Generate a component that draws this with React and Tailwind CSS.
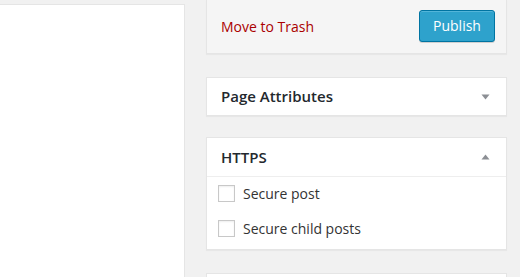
import React from "react";

function Down() {
  return (
    <svg width="9" height="6" viewBox="0 0 9 6">
      <polygon points="0.5,0.5 8.5,0.5 4.5,5.5" fill="#8c8f94" />
    </svg>
  );
}
function Up() {
  return (
    <svg width="9" height="6" viewBox="0 0 9 6">
      <polygon points="0.5,5.5 8.5,5.5 4.5,0.5" fill="#8c8f94" />
    </svg>
  );
}

function Check({ label }) {
  return (
    <label className="flex items-center h-[35px]">
      <span className="w-[17px] h-[17px] border border-[#c8c8c8] bg-white shadow-[inset_0_1px_2px_rgba(0,0,0,0.07)] ml-[11px] mr-[8px]" />
      <span className="text-[14px] text-[#333]">{label}</span>
    </label>
  );
}

export default function App() {
  return (
    <div
      className="w-[520px] h-[277px] bg-[#f1f1f1] overflow-hidden flex"
      style={{ fontFamily: '"Open Sans", "Noto Sans", sans-serif' }}
    >
      <div className="w-[185px] shrink-0 mt-[4px] h-[300px] bg-white border-t border-r border-[#e5e5e5]" />
      <div className="ml-[21px] w-[301px] shrink-0 flex flex-col">
        <div className="shrink-0 h-[54px] bg-[#f5f5f5] border border-t-0 border-[#e5e5e5] shadow-[0_1px_1px_rgba(0,0,0,0.04)] flex items-center justify-between pl-[14px] pr-[11px]">
          <span className="text-[14px] text-[#a00] -mt-[1px]">Move to Trash</span>
          <button className="w-[76px] h-[32px] rounded-[3px] bg-[#2ea2cc] border border-[#0074a2] text-white text-[14px] shadow-[inset_0_1px_0_rgba(120,200,230,0.5),0_1px_0_rgba(0,0,0,0.15)] -mt-[2px]">
            Publish
          </button>
        </div>
        <div className="shrink-0 mt-[23px] h-[39px] bg-white border border-[#e5e5e5] shadow-[0_1px_1px_rgba(0,0,0,0.04)] flex items-center justify-between pl-[14px] pr-[16px]">
          <span className="text-[15px] font-semibold text-[#23282d]">Page Attributes</span>
          <Down />
        </div>
        <div className="shrink-0 mt-[21px] bg-white border border-[#e5e5e5] shadow-[0_1px_1px_rgba(0,0,0,0.04)]">
          <div className="h-[39px] border-b border-[#eee] flex items-center justify-between pl-[14px] pr-[16px]">
            <span className="text-[15px] font-semibold text-[#23282d]">HTTPS</span>
            <Up />
          </div>
          <div className="-mt-[1px] pb-[3px]">
            <Check label="Secure post" />
            <Check label="Secure child posts" />
          </div>
        </div>
        <div className="shrink-0 mt-[23px] h-[40px] bg-white border border-[#e5e5e5]" />
      </div>
    </div>
  );
}
